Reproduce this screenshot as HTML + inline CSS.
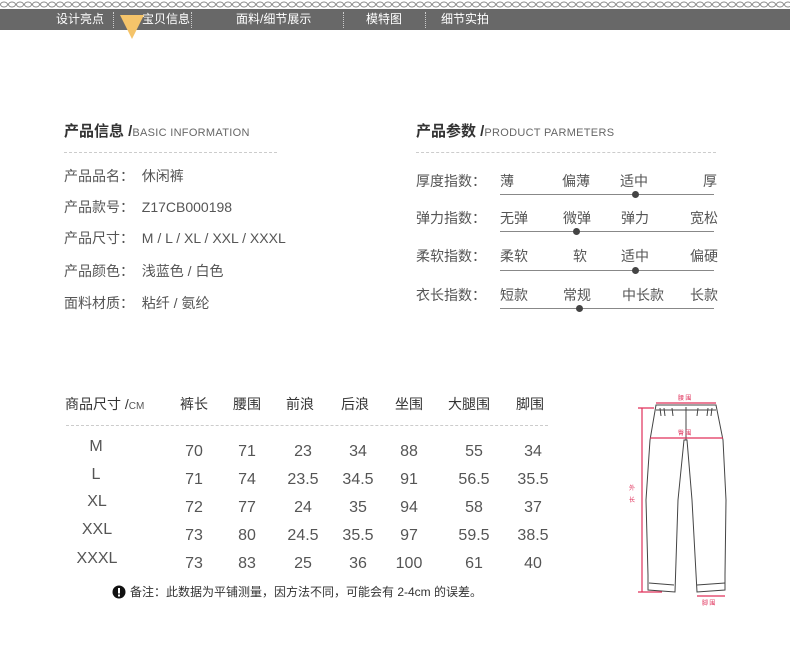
<!DOCTYPE html>
<html><head><meta charset="utf-8"><style>
body{margin:0;width:790px;height:649px;background:#fff;position:relative;overflow:hidden;font-family:"Liberation Sans","Noto Sans CJK SC",sans-serif;color:#555}
.a{position:absolute;white-space:nowrap;line-height:1}
.nav{position:absolute;left:0;top:9px;width:790px;height:21px;background:#686868}
.nav span{position:absolute;top:4px;color:#fff;font-size:12px;line-height:13px}
.sep{position:absolute;top:3px;height:16px;border-left:1px dotted #ccc}
.dash{position:absolute;height:0;border-top:1px dashed #ccc}
.h{font-size:15px;font-weight:bold;color:#333}
.h small{font-size:11px;font-weight:normal;color:#666;letter-spacing:.3px}
.r{font-size:14px;color:#555}
.ln{position:absolute;height:1px;background:#888;left:500px;width:214px}
.dot{position:absolute;width:7px;height:7px;border-radius:50%;background:#444}
.t{font-size:14px;color:#333;transform:translateX(-50%)}
.v{font-size:16px;color:#555;transform:translateX(-50%)}
</style></head><body>
<svg class="a" style="left:0;top:0" width="790" height="9"><defs><pattern id="c" width="8" height="9" patternUnits="userSpaceOnUse"><ellipse cx="4" cy="4.5" rx="3.5" ry="2.5" fill="none" stroke="#888" stroke-width="1"/></pattern></defs><rect width="790" height="9" fill="url(#c)"/></svg>
<div class="nav">
<span style="left:56px">设计亮点</span>
<div class="sep" style="left:113px"></div>
<span style="left:142px">宝贝信息</span>
<div class="sep" style="left:191px"></div>
<span style="left:236px">面料/细节展示</span>
<div class="sep" style="left:343px"></div>
<span style="left:366px">模特图</span>
<div class="sep" style="left:425px"></div>
<span style="left:441px">细节实拍</span>
</div>
<svg class="a" style="left:119px;top:15px" width="26" height="25"><polygon points="1,0 25,0 13,24" fill="#f5c46a"/></svg>

<div class="a h" style="left:64px;top:124px">产品信息 /<small>BASIC INFORMATION</small></div>
<div class="dash" style="left:64px;top:152px;width:213px"></div>
<div class="a r" style="left:64px;top:169px">产品品名：&nbsp; 休闲裤</div>
<div class="a r" style="left:64px;top:200px">产品款号：&nbsp; Z17CB000198</div>
<div class="a r" style="left:64px;top:231px">产品尺寸：&nbsp; M / L / XL / XXL / XXXL</div>
<div class="a r" style="left:64px;top:264px">产品颜色：&nbsp; 浅蓝色 / 白色</div>
<div class="a r" style="left:64px;top:296px">面料材质：&nbsp; 粘纤 / 氨纶</div>

<div class="a h" style="left:416px;top:124px">产品参数 /<small>PRODUCT PARMETERS</small></div>
<div class="dash" style="left:416px;top:152px;width:300px"></div>

<div class="a r" style="left:416px;top:174px">厚度指数：</div>
<div class="a r" style="left:500px;top:174px">薄</div><div class="a r" style="left:562px;top:174px">偏薄</div><div class="a r" style="left:620px;top:174px">适中</div><div class="a r" style="left:703px;top:174px">厚</div>
<div class="ln" style="top:194px"></div><div class="dot" style="left:632px;top:191px"></div>

<div class="a r" style="left:416px;top:211px">弹力指数：</div>
<div class="a r" style="left:500px;top:211px">无弹</div><div class="a r" style="left:563px;top:211px">微弹</div><div class="a r" style="left:621px;top:211px">弹力</div><div class="a r" style="left:690px;top:211px">宽松</div>
<div class="ln" style="top:231px"></div><div class="dot" style="left:573px;top:228px"></div>

<div class="a r" style="left:416px;top:249px">柔软指数：</div>
<div class="a r" style="left:500px;top:249px">柔软</div><div class="a r" style="left:573px;top:249px">软</div><div class="a r" style="left:621px;top:249px">适中</div><div class="a r" style="left:690px;top:249px">偏硬</div>
<div class="ln" style="top:270px"></div><div class="dot" style="left:632px;top:267px"></div>

<div class="a r" style="left:416px;top:288px">衣长指数：</div>
<div class="a r" style="left:500px;top:288px">短款</div><div class="a r" style="left:563px;top:288px">常规</div><div class="a r" style="left:622px;top:288px">中长款</div><div class="a r" style="left:690px;top:288px">长款</div>
<div class="ln" style="top:308px"></div><div class="dot" style="left:576px;top:305px"></div>

<div class="a" style="left:65px;top:397px;font-size:14px;color:#333">商品尺寸 /<span style="font-size:10px;color:#555">CM</span></div>
<div class="a t" style="left:194px;top:397px">裤长</div>
<div class="a t" style="left:247px;top:397px">腰围</div>
<div class="a t" style="left:300px;top:397px">前浪</div>
<div class="a t" style="left:355px;top:397px">后浪</div>
<div class="a t" style="left:409px;top:397px">坐围</div>
<div class="a t" style="left:469px;top:397px">大腿围</div>
<div class="a t" style="left:530px;top:397px">脚围</div>
<div class="dash" style="left:66px;top:425px;width:482px"></div>

<div class="a v" style="left:96px;top:439px">M</div>
<div class="a v" style="left:96px;top:467px">L</div>
<div class="a v" style="left:97px;top:494px">XL</div>
<div class="a v" style="left:97px;top:522px">XXL</div>
<div class="a v" style="left:97px;top:551px">XXXL</div>

<div class="a v" style="left:194px;top:444px">70</div><div class="a v" style="left:247px;top:444px">71</div><div class="a v" style="left:303px;top:444px">23</div><div class="a v" style="left:358px;top:444px">34</div><div class="a v" style="left:409px;top:444px">88</div><div class="a v" style="left:474px;top:444px">55</div><div class="a v" style="left:533px;top:444px">34</div>
<div class="a v" style="left:194px;top:472px">71</div><div class="a v" style="left:247px;top:472px">74</div><div class="a v" style="left:303px;top:472px">23.5</div><div class="a v" style="left:358px;top:472px">34.5</div><div class="a v" style="left:409px;top:472px">91</div><div class="a v" style="left:474px;top:472px">56.5</div><div class="a v" style="left:533px;top:472px">35.5</div>
<div class="a v" style="left:194px;top:500px">72</div><div class="a v" style="left:247px;top:500px">77</div><div class="a v" style="left:303px;top:500px">24</div><div class="a v" style="left:358px;top:500px">35</div><div class="a v" style="left:409px;top:500px">94</div><div class="a v" style="left:474px;top:500px">58</div><div class="a v" style="left:533px;top:500px">37</div>
<div class="a v" style="left:194px;top:528px">73</div><div class="a v" style="left:247px;top:528px">80</div><div class="a v" style="left:303px;top:528px">24.5</div><div class="a v" style="left:358px;top:528px">35.5</div><div class="a v" style="left:409px;top:528px">97</div><div class="a v" style="left:474px;top:528px">59.5</div><div class="a v" style="left:533px;top:528px">38.5</div>
<div class="a v" style="left:194px;top:556px">73</div><div class="a v" style="left:247px;top:556px">83</div><div class="a v" style="left:303px;top:556px">25</div><div class="a v" style="left:358px;top:556px">36</div><div class="a v" style="left:409px;top:556px">100</div><div class="a v" style="left:474px;top:556px">61</div><div class="a v" style="left:533px;top:556px">40</div>

<svg class="a" style="left:112px;top:585px" width="14" height="14"><circle cx="7" cy="7" r="6.5" fill="#111"/><rect x="6" y="3" width="2" height="5.5" fill="#fff"/><rect x="6" y="9.5" width="2" height="2" fill="#fff"/></svg>
<div class="a" style="left:130px;top:586px;font-size:12px;color:#333">备注：此数据为平铺测量，因方法不同，可能会有 2-4cm 的误差。</div>

<svg class="a" style="left:600px;top:380px" width="150" height="230">
<g fill="none" stroke="#444" stroke-width="1">
<path d="M56,25 L116,25 L123,60 L126,120 L125,195 L125,210 L97,212 L92,120 L87,60 L84,60 L78,120 L75,212 L48,210 L48,195 L46,120 L50,60 Z"/>
<path d="M56,30 L116,30"/>
<path d="M86,27 L86,60"/>
<path d="M60,28 l1,8 M64,28 l1,8 M72,28 l1,8 M98,28 l-1,8 M108,28 l-1,8 M112,28 l-1,8"/>
<path d="M49,203 L74,205 M97,205 L125,203"/>
</g>
<g stroke="#e0305a" stroke-width="1.2" fill="none">
<path d="M56,23 L116,23"/>
<path d="M50,58 L123,58"/>
<path d="M42,28 L42,212 M38,28 L54,28 M38,212 L62,212"/>
<path d="M97,216 L125,216"/>
</g>
<g fill="#e0305a" font-size="6" font-family="Noto Sans CJK SC,sans-serif">
<text x="78" y="20">腰 围</text>
<text x="78" y="55">臀 围</text>
<text x="29" y="110">外</text><text x="29" y="122">长</text>
<text x="102" y="225">脚 围</text>
</g>
</svg>
</body></html>
